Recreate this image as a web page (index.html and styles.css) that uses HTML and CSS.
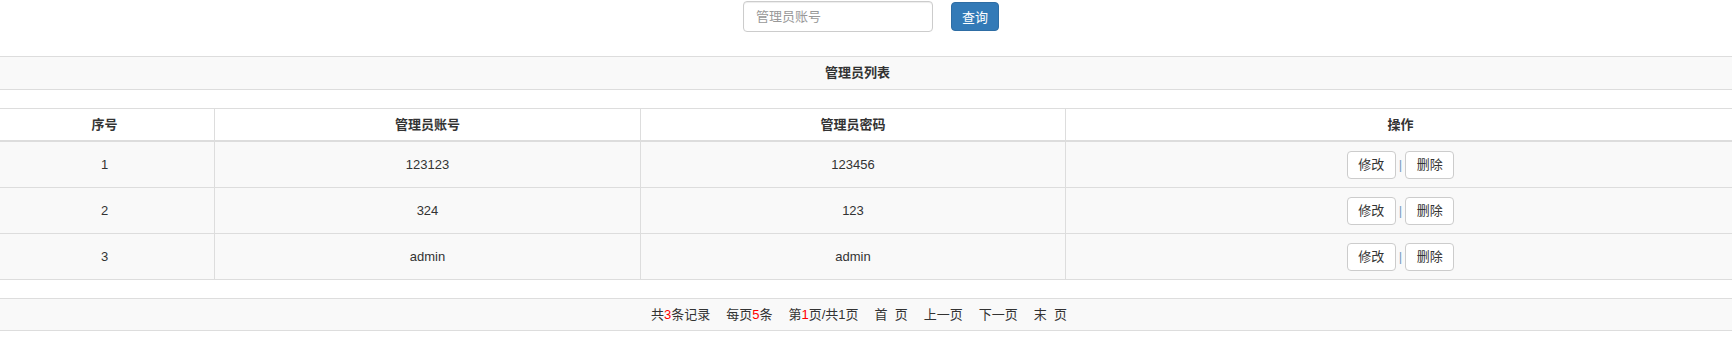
FILE: index.html
```html
<!DOCTYPE html>
<html lang="zh-CN">
<head>
<meta charset="utf-8">
<title>管理员列表</title>
<link rel="stylesheet" href="styles.css">
</head>
<body>
<form class="search">
  <input class="search-input" type="text" placeholder="管理员账号">
  <button class="btn-primary" type="button">查询</button>
</form>

<div class="caption-bar">管理员列表</div>

<table class="grid">
  <colgroup>
    <col class="c1"><col class="c2"><col class="c3"><col class="c4">
  </colgroup>
  <thead>
    <tr><th>序号</th><th>管理员账号</th><th>管理员密码</th><th>操作</th></tr>
  </thead>
  <tbody>
    <tr>
      <td>1</td><td>123123</td><td>123456</td>
      <td><div class="ops"><button class="btn" type="button">修改</button><span class="sep">|</span><button class="btn" type="button">删除</button></div></td>
    </tr>
    <tr>
      <td>2</td><td>324</td><td>123</td>
      <td><div class="ops"><button class="btn" type="button">修改</button><span class="sep">|</span><button class="btn" type="button">删除</button></div></td>
    </tr>
    <tr>
      <td>3</td><td>admin</td><td>admin</td>
      <td><div class="ops"><button class="btn" type="button">修改</button><span class="sep">|</span><button class="btn" type="button">删除</button></div></td>
    </tr>
  </tbody>
</table>

<div class="pager">
  <span>共<em>3</em>条记录</span>
  <span>每页<em>5</em>条</span>
  <span>第<em>1</em>页/共1页</span>
  <span>首&nbsp;&nbsp;页</span>
  <span>上一页</span>
  <span>下一页</span>
  <span>末&nbsp;&nbsp;页</span>
</div>
</body>
</html>
```

FILE: styles.css
```css
html, body {
  margin: 0;
  padding: 0;
  background: #fff;
  overflow: hidden;
}
body {
  font-family: "Liberation Sans", "Noto Sans CJK SC", sans-serif;
  font-size: 13px;
  color: #333;
}

.search {
  display: flex;
  justify-content: center;
  align-items: center;
  gap: 18px;
  height: 33px;
  margin: 0 0 23px 0;
  padding-left: 10px;
}
.search-input {
  box-sizing: border-box;
  width: 190px;
  height: 31px;
  margin: 0;
  padding: 0 12px;
  border: 1px solid #ccc;
  border-radius: 4px;
  box-shadow: inset 0 1px 1px rgba(0,0,0,.075);
  font-family: inherit;
  font-size: 13px;
  color: #555;
  outline: none;
}
.search-input::placeholder {
  color: #999;
}
.btn-primary {
  box-sizing: border-box;
  width: 48px;
  height: 29px;
  margin: 0;
  padding: 0;
  border: 1px solid #2e6da4;
  border-radius: 4px;
  background: #337ab7;
  color: #fff;
  font-family: inherit;
  font-size: 13px;
}

.caption-bar {
  border-top: 1px solid #ddd;
  border-bottom: 1px solid #ddd;
  background: #f9f9f9;
  height: 32px;
  line-height: 32px;
  text-align: center;
  font-weight: bold;
  padding-right: 17px;
}

.grid {
  margin: 18px 0 18px -5px;
  width: 1740px;
  table-layout: fixed;
  border-collapse: separate;
  border-spacing: 0;
}
.grid col.c1 { width: 219px; }
.grid col.c2 { width: 426px; }
.grid col.c3 { width: 425px; }
.grid col.c4 { width: 670px; }

.grid th, .grid td {
  padding: 0;
  text-align: center;
  border-left: 1px solid #ddd;
}
.grid th:first-child, .grid td:first-child {
  border-left: none;
}
.grid th {
  font-weight: bold;
  line-height: 31px;
  border-top: 1px solid #ddd;
  border-bottom: 2px solid #ddd;
  background: #fff;
}
.grid td {
  line-height: 45px;
  height: 45px;
  border-bottom: 1px solid #ddd;
  background: #f9f9f9;
}

.ops {
  display: flex;
  justify-content: center;
  align-items: center;
  gap: 3px;
  height: 45px;
}
.btn {
  box-sizing: border-box;
  width: 49px;
  height: 28px;
  margin: 0;
  padding: 0;
  border: 1px solid #ccc;
  border-radius: 4px;
  background: #fff;
  color: #333;
  font-family: inherit;
  font-size: 13px;
  line-height: 26px;
}
.sep {
  color: #7a9cc0;
  line-height: 20px;
}

.pager {
  display: flex;
  justify-content: center;
  gap: 16px;
  border-top: 1px solid #ddd;
  border-bottom: 1px solid #ddd;
  background: #f9f9f9;
  height: 31px;
  line-height: 31px;
  padding-right: 14px;
}
.pager em {
  font-style: normal;
  color: #f00;
}
```
